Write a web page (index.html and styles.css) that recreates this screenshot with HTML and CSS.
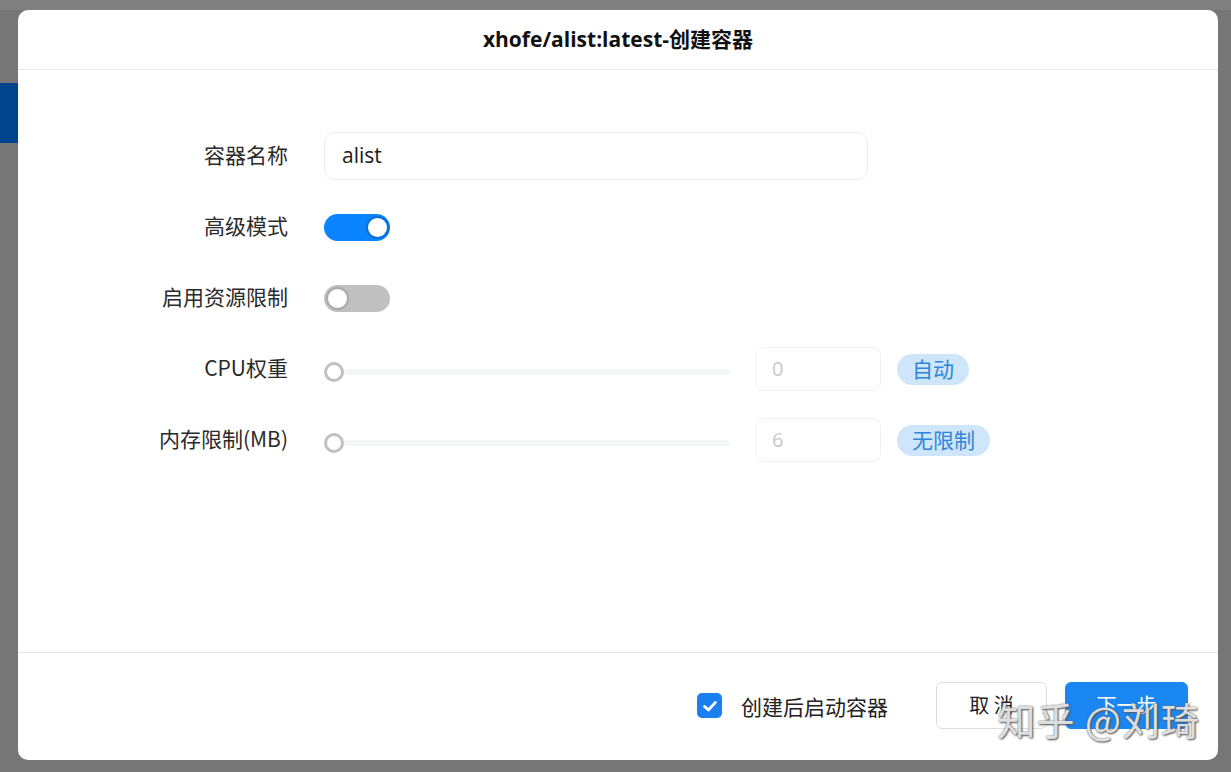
FILE: index.html
```html
<!DOCTYPE html>
<html lang="zh-CN">
<head>
  <meta charset="UTF-8" />
  <title>创建容器</title>
  <meta name="viewport" content="width=device-width, initial-scale=1" />
  <link rel="stylesheet" href="styles.css">
</head>
<body>

  <div class="backdrop-tab"></div>

  <div class="dialog">
    <div class="dialog-header">xhofe/alist:latest-创建容器</div>

    <div class="dialog-body">
      <div class="form">
        <label class="form-label">容器名称</label>
        <div class="form-field">
          <div class="text-input">alist</div>
        </div>

        <label class="form-label">高级模式</label>
        <div class="form-field">
          <span class="switch on"><span class="knob"></span></span>
        </div>

        <label class="form-label">启用资源限制</label>
        <div class="form-field">
          <span class="switch"><span class="knob"></span></span>
        </div>

        <label class="form-label">CPU权重</label>
        <div class="form-field">
          <div class="slider"><span class="thumb"></span><span class="track"></span></div>
          <div class="num-input">0</div>
          <span class="tag">自动</span>
        </div>

        <label class="form-label">内存限制(MB)</label>
        <div class="form-field">
          <div class="slider"><span class="thumb"></span><span class="track"></span></div>
          <div class="num-input">6</div>
          <span class="tag">无限制</span>
        </div>
      </div>
    </div>

    <div class="dialog-footer">
      <label class="check">
        <span class="check-box">
          <svg width="18" height="18" viewBox="0 0 18 18"><path d="M3.6 9.4 L7.4 13 L14.4 5.4" fill="none" stroke="#fff" stroke-width="2.8" stroke-linecap="round" stroke-linejoin="round"/></svg>
        </span>
        创建后启动容器
      </label>
      <button class="btn">取 消</button>
      <button class="btn btn-primary">下一步</button>
    </div>

    <div class="watermark">知乎 @刘琦</div>
  </div>

</body>
</html>
```

FILE: styles.css
```css
body {
  margin: 0;
  height: 772px;
  overflow: hidden;
  background: #767676;
  border-top: 10px solid #808080;
  box-sizing: border-box;
  font-family: 'Noto Sans CJK SC', 'Noto Sans', sans-serif;
  color: #222;
}

.backdrop-tab {
  position: absolute;
  top: 83px;
  left: 0;
  width: 18px;
  height: 60px;
  background: #00448c;
}

.dialog {
  position: relative;
  margin-left: 18px;
  width: 1200px;
  height: 750px;
  background: #fff;
  border-radius: 10px;
  display: flex;
  flex-direction: column;
  overflow: hidden;
}

.dialog-header {
  height: 59px;
  line-height: 59px;
  border-bottom: 1px solid #e6e6e6;
  text-align: center;
  font-family: 'Open Sans', 'Noto Sans CJK SC', sans-serif;
  font-size: 21px;
  font-weight: bold;
  color: #111;
}

.dialog-body {
  flex: 1;
  padding-top: 62px;
}

.form {
  display: grid;
  grid-template-columns: 270px 1fr;
  grid-auto-rows: 48px;
  column-gap: 36px;
  row-gap: 23px;
}

.form-label {
  display: flex;
  align-items: center;
  justify-content: flex-end;
  padding-bottom: 4px;
  font-size: 21px;
  color: #2a2a2a;
}

.form-field {
  display: flex;
  align-items: center;
}

.text-input {
  width: 544px;
  height: 48px;
  box-sizing: border-box;
  border: 1px solid #ececec;
  border-radius: 10px;
  padding: 0 17px 2px;
  display: flex;
  align-items: center;
  font-family: 'Open Sans', 'Noto Sans CJK SC', sans-serif;
  font-size: 21px;
  color: #1a1a1a;
}

/* 开关 */
.switch {
  position: relative;
  width: 66px;
  height: 27px;
  border-radius: 14px;
  background: #c0c0c0;
}

.switch .knob {
  position: absolute;
  top: 2px;
  left: 2px;
  width: 23px;
  height: 23px;
  box-sizing: border-box;
  border-radius: 50%;
  background: #fff;
  border: 2px solid #aaa;
}

.switch.on {
  background: #0a84ff;
}

.switch.on .knob {
  left: auto;
  right: 1px;
  border-color: #0a6fd8;
}

/* 滑块 */
.slider {
  width: 406px;
  display: flex;
  align-items: center;
  padding-top: 6px;
}

.slider .thumb {
  width: 20px;
  height: 20px;
  box-sizing: border-box;
  border-radius: 50%;
  border: 3px solid #c0c0c0;
  background: #fff;
}

.slider .track {
  flex: 1;
  height: 6px;
  background: #f4f5f7;
  border-radius: 3px;
}

.num-input {
  margin-left: 25px;
  width: 126px;
  height: 44px;
  box-sizing: border-box;
  border: 1px solid #f2f2f2;
  border-radius: 8px;
  padding: 0 16px 2px;
  display: flex;
  align-items: center;
  font-family: 'Open Sans', sans-serif;
  font-size: 20px;
  color: #c8c8c8;
}

.tag {
  margin-left: 16px;
  padding: 0 15px 3px;
  height: 31px;
  box-sizing: border-box;
  line-height: 28px;
  border-radius: 16px;
  background: #cfe5f9;
  color: #2e86d8;
  font-size: 21px;
}

.dialog-footer {
  height: 108px;
  border-top: 1px solid #e3e3e3;
  box-sizing: border-box;
  display: flex;
  align-items: center;
  justify-content: flex-end;
  padding: 0 30px 2px 0;
}

.check {
  display: flex;
  align-items: center;
  gap: 19px;
  font-size: 21px;
  color: #222;
  margin-right: 48px;
}

.check-box {
  width: 25px;
  height: 25px;
  border-radius: 5px;
  background: #1a80f0;
  display: flex;
  align-items: center;
  justify-content: center;
}

.btn {
  height: 47px;
  width: 111px;
  border: 1px solid #dcdcdc;
  border-radius: 6px;
  background: #fff;
  font-family: 'Noto Sans CJK SC', sans-serif;
  font-size: 20px;
  color: #222;
  padding: 0 0 3px;
}

.btn-primary {
  margin-left: 18px;
  width: 123px;
  background: #1b87f2;
  border-color: #1b87f2;
  color: #fff;
}

.watermark {
  position: absolute;
  right: 18px;
  bottom: 14px;
  font-size: 38px;
  color: rgba(255, 255, 255, 0.8);
  text-shadow: 0 0 2px #666, 1px 1px 2px #555;
  letter-spacing: 1px;
}
```
